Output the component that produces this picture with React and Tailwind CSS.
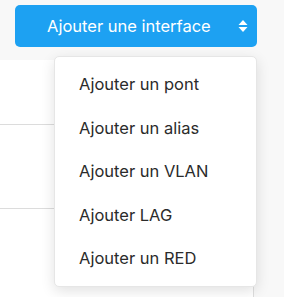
import React from 'react';

const items = ['Ajouter un pont', 'Ajouter un alias', 'Ajouter un VLAN', 'Ajouter LAG', 'Ajouter un RED'];

const App = () => {
    return (
        <div className="relative w-[284px] h-[297px] overflow-hidden bg-[#f8f8f8]" style={{ fontFamily: 'Inter, Roboto, "Liberation Sans", sans-serif' }}>
            {/* background table */}
            <div className="absolute left-0 top-[60px] w-[254px] h-[260px] bg-white border-r border-[#dedede]">
                <div className="h-[65px] border-b border-[#dcdcdc]" />
                <div className="h-[84px] border-b border-[#dcdcdc]" />
            </div>

            {/* button */}
            <div className="pt-[5px] pl-[15px]">
                <button className="w-[242px] h-[42px] rounded-[5px] bg-[#1da1f2] text-white flex items-center pl-[32px] pr-[8px]">
                    <span className="text-[16.5px] leading-none">Ajouter une interface</span>
                    <svg className="ml-auto mr-[1px]" width="10" height="14" viewBox="0 0 10 14" fill="white">
                        <path d="M5 1 L9.5 6 L0.5 6 Z" />
                        <path d="M5 13 L9.5 8 L0.5 8 Z" />
                    </svg>
                </button>
            </div>

            {/* dropdown menu */}
            <div className="absolute left-[54px] top-[56px] w-[203px] h-[231px] bg-white rounded-[5px] border border-[#e6e6e6] shadow-[0_4px_14px_rgba(0,0,0,0.12)] pt-[6px]">
                {items.map((t) => (
                    <div key={t} className="h-[43.5px] flex items-center pl-[24px] text-[16.5px] text-[#2b2b2b]">
                        {t}
                    </div>
                ))}
            </div>
        </div>
    );
};

export default App;
